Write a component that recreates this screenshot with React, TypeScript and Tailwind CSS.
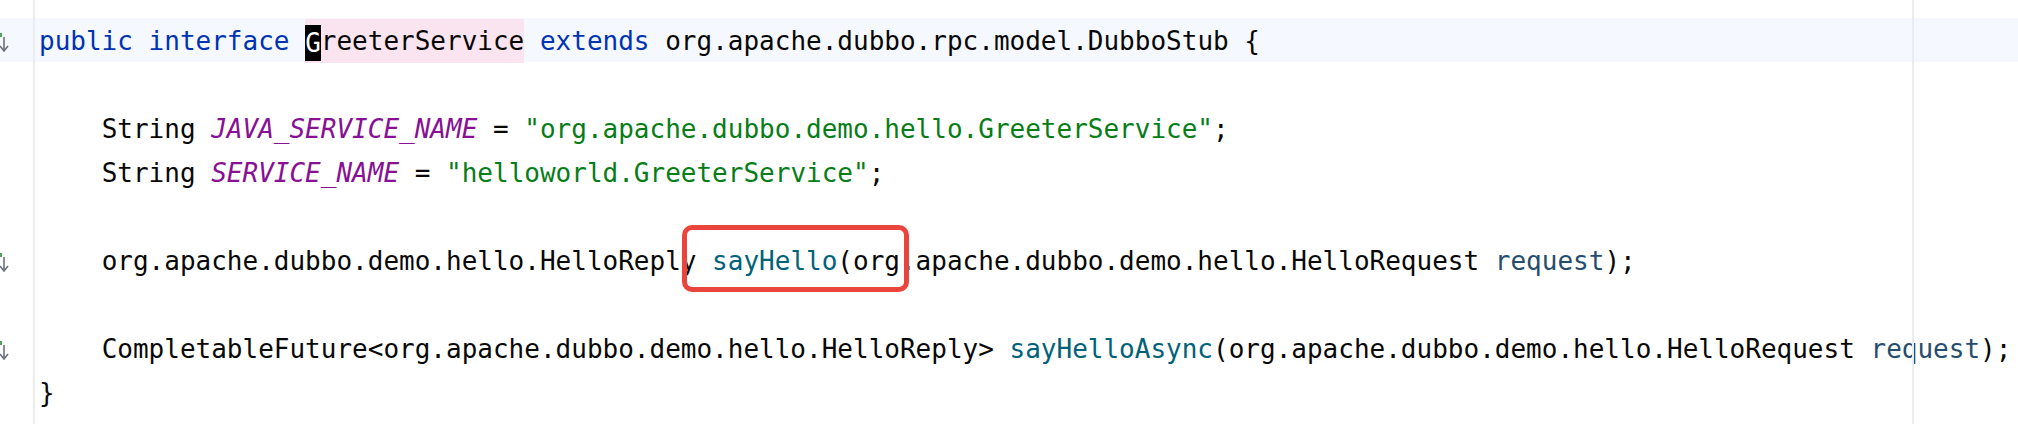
import React from "react";

const K = ({ children }: { children: React.ReactNode }) => <span className="text-[#0033b3]">{children}</span>;
const C = ({ children }: { children: React.ReactNode }) => <span className="text-[#871094] italic">{children}</span>;
const S = ({ children }: { children: React.ReactNode }) => <span className="text-[#067d17]">{children}</span>;
const M = ({ children }: { children: React.ReactNode }) => <span className="text-[#00627a]">{children}</span>;
const P = ({ children }: { children: React.ReactNode }) => <span className="text-[#264d6e]">{children}</span>;

function GutterIcon() {
  return (
    <svg width="10" height="22" viewBox="0 0 10 22" className="absolute left-0 top-[14px]">
      <rect x="0" y="1" width="2" height="4" fill="#4fa35a" />
      <line x1="4" y1="5" x2="4" y2="19" stroke="#6c707e" strokeWidth="1.6" />
      <polyline points="0,14 4,19 8,14" fill="none" stroke="#6c707e" strokeWidth="1.6" />
    </svg>
  );
}

function Row({
  children,
  icon,
  current,
  h = "h-[44px]",
}: {
  children?: React.ReactNode;
  icon?: boolean;
  current?: boolean;
  h?: string;
}) {
  return (
    <div className={`flex ${h} ${current ? "bg-[#f5f8fe]" : ""}`}>
      <div className="relative w-[35px] shrink-0 border-r-2 border-[#ebecf0]">{icon && <GutterIcon />}</div>
      <div className="pl-[4px] whitespace-pre leading-[44px] pt-[1px]">{children}</div>
    </div>
  );
}

export default function App() {
  return (
    <div
      className="relative w-[2018px] h-[424px] overflow-hidden bg-white text-[26px] text-[#080808] flex flex-col"
      style={{ fontFamily: '"DejaVu Sans Mono", "Liberation Mono", monospace' }}
    >
      <Row h="h-[18px]" />
      <Row icon current>
        <K>public</K> <K>interface</K>{" "}
        <span className="inline-block bg-[#f9e4ef] leading-[44px] align-top">
          <span className="inline-block bg-black text-white leading-[36px] align-middle">G</span>reeterService
        </span>{" "}
        <K>extends</K> org.apache.dubbo.rpc.model.DubboStub {"{"}
      </Row>
      <Row />
      <Row>
        {"    "}String <C>JAVA_SERVICE_NAME</C> = <S>"org.apache.dubbo.demo.hello.GreeterService"</S>;
      </Row>
      <Row>
        {"    "}String <C>SERVICE_NAME</C> = <S>"helloworld.GreeterService"</S>;
      </Row>
      <Row />
      <Row icon>
        {"    "}org.apache.dubbo.demo.hello.HelloReply <M>sayHello</M>(org.apache.dubbo.demo.hello.HelloRequest{" "}
        <P>request</P>);
      </Row>
      <Row />
      <Row icon>
        {"    "}CompletableFuture&lt;org.apache.dubbo.demo.hello.HelloReply&gt; <M>sayHelloAsync</M>
        (org.apache.dubbo.demo.hello.HelloRequest <P>request</P>);
      </Row>
      <Row>{"}"}</Row>
      <Row h="flex-1" />

      <div className="pointer-events-none absolute left-[1912px] top-0 h-full w-[2px] bg-[#ebecf0]" />
      <div className="pointer-events-none absolute left-[682px] top-[225px] w-[227px] h-[67px] rounded-[10px] border-[5px] border-[#e9453c]" />
    </div>
  );
}
